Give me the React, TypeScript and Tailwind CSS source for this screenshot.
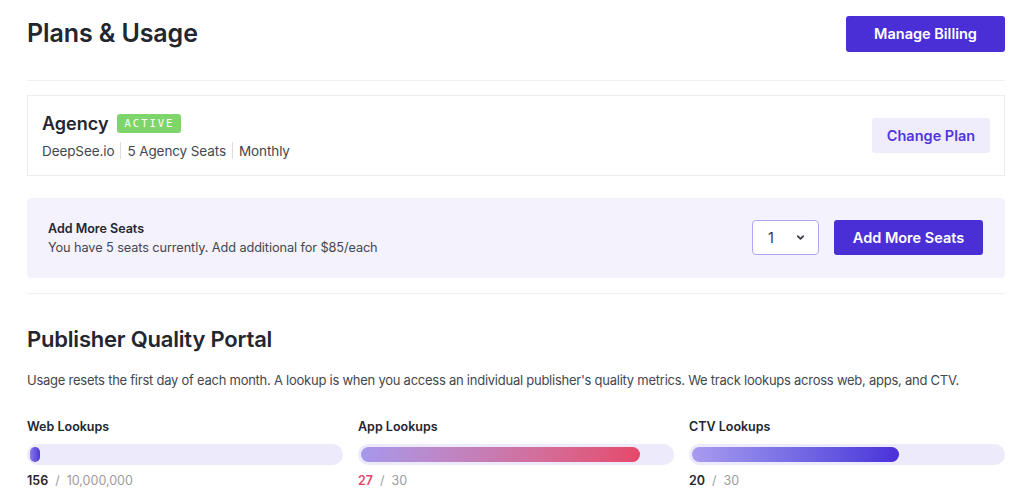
import React from "react";

type Usage = {
  label: string;
  used: number;
  limit: number;
  bar: string;
  usedClass: string;
};

const usage: Usage[] = [
  {
    label: "Web Lookups",
    used: 156,
    limit: 10000000,
    bar: "bg-gradient-to-r from-[#8a78ea] to-[#4f33d9]",
    usedClass: "text-[#23262f]",
  },
  {
    label: "App Lookups",
    used: 27,
    limit: 30,
    bar: "bg-gradient-to-r from-[#a698ec] to-[#e5486a]",
    usedClass: "text-[#e0476a]",
  },
  {
    label: "CTV Lookups",
    used: 20,
    limit: 30,
    bar: "bg-gradient-to-r from-[#a99bee] to-[#4b2ed8]",
    usedClass: "text-[#23262f]",
  },
];

function UsageBar({ item }: { item: Usage }) {
  const pct = Math.min(100, (item.used / item.limit) * 100);
  return (
    <div>
      <div className="text-[12.5px] font-semibold leading-5 text-[#23262f]">{item.label}</div>
      <div className="mt-[7px] h-[21px] rounded-full bg-[#eceafb] p-[3px]">
        <div
          className={`h-full min-w-[10px] rounded-full ${item.bar}`}
          style={{ width: `${pct}%` }}
        />
      </div>
      <div className="mt-[6px] text-[12.5px] leading-5">
        <span className={`font-semibold ${item.usedClass}`}>{item.used.toLocaleString("en-US")}</span>
        <span className="mx-[7px] text-[#9a9ca3]">/</span>
        <span className="text-[#9a9ca3]">{item.limit.toLocaleString("en-US")}</span>
      </div>
    </div>
  );
}

export default function App() {
  return (
    <div className="min-h-screen bg-white pl-[27px] pr-[19px] pt-[15px] font-['Inter',sans-serif] text-[#23262f]">
      <div className="flex items-center justify-between">
        <h1 className="text-[25px] font-semibold tracking-[-0.1px]">Plans &amp; Usage</h1>
        <button className="h-[36px] w-[159px] rounded-[3px] bg-[#4a2fd7] text-[14.5px] font-semibold text-white">
          Manage Billing
        </button>
      </div>

      <div className="mt-[27px] h-px bg-[#f0f0f3]" />

      <div className="mt-[14px] flex items-center justify-between border border-[#ececef] px-[14px] pb-[14px] pt-[15px]">
        <div>
          <div className="flex items-center gap-[9px]">
            <span className="text-[18px] font-semibold leading-[26px]">Agency</span>
            <span className="rounded-[3px] bg-[#7ed56b] px-[7px] py-[2px] font-['DejaVu_Sans_Mono',monospace] text-[10.5px] tracking-[2px] text-white">
              ACTIVE
            </span>
          </div>
          <div className="mt-[4px] flex items-center text-[13.5px] leading-5 tracking-[-0.1px] text-[#44474f]">
            <span>DeepSee.io</span>
            <span className="mx-[6px] h-[17px] w-px bg-[#dcdce2]" />
            <span>5 Agency Seats</span>
            <span className="mx-[6px] h-[17px] w-px bg-[#dcdce2]" />
            <span>Monthly</span>
          </div>
        </div>
        <button className="h-[35px] w-[118px] rounded-[3px] bg-[#efedfc] text-[14.5px] font-semibold text-[#5136dc]">
          Change Plan
        </button>
      </div>

      <div className="mt-[22px] flex items-center justify-between rounded-[4px] bg-[#f3f2fd] py-[21px] pl-[21px] pr-[22px]">
        <div className="leading-[19px]">
          <div className="text-[12.5px] font-semibold text-[#23262f]">Add More Seats</div>
          <div className="text-[12.75px] tracking-[-0.1px] text-[#44474f]">
            You have 5 seats currently. Add additional for $85/each
          </div>
        </div>
        <div className="flex items-center gap-[15px]">
          <div className="flex h-[35px] w-[67px] items-center justify-between rounded-[4px] border border-[#b1a6f2] bg-white pl-[15px] pr-[12px] text-[14.5px] text-[#33363e]">
            <span>1</span>
            <svg width="11" height="11" viewBox="0 0 24 24" fill="none" stroke="#33363e" strokeWidth="3.5" strokeLinecap="round" strokeLinejoin="round">
              <path d="M6 9l6 6 6-6" />
            </svg>
          </div>
          <button className="h-[35px] w-[149px] rounded-[3px] bg-[#4a2fd7] text-[14.5px] font-semibold text-white">
            Add More Seats
          </button>
        </div>
      </div>

      <div className="mt-[15px] h-px bg-[#f0f0f3]" />

      <h2 className="mt-[31px] text-[22px] font-semibold leading-7 tracking-[-0.2px]">Publisher Quality Portal</h2>
      <p className="mt-[17px] whitespace-nowrap text-[13px] leading-5 tracking-[-0.25px] text-[#44474f]">
        Usage resets the first day of each month. A lookup is when you access an individual publisher's quality
        metrics. We track lookups across web, apps, and CTV.
      </p>

      <div className="mt-[27px] grid grid-cols-3 gap-[15px]">
        {usage.map((u) => (
          <UsageBar key={u.label} item={u} />
        ))}
      </div>
    </div>
  );
}
